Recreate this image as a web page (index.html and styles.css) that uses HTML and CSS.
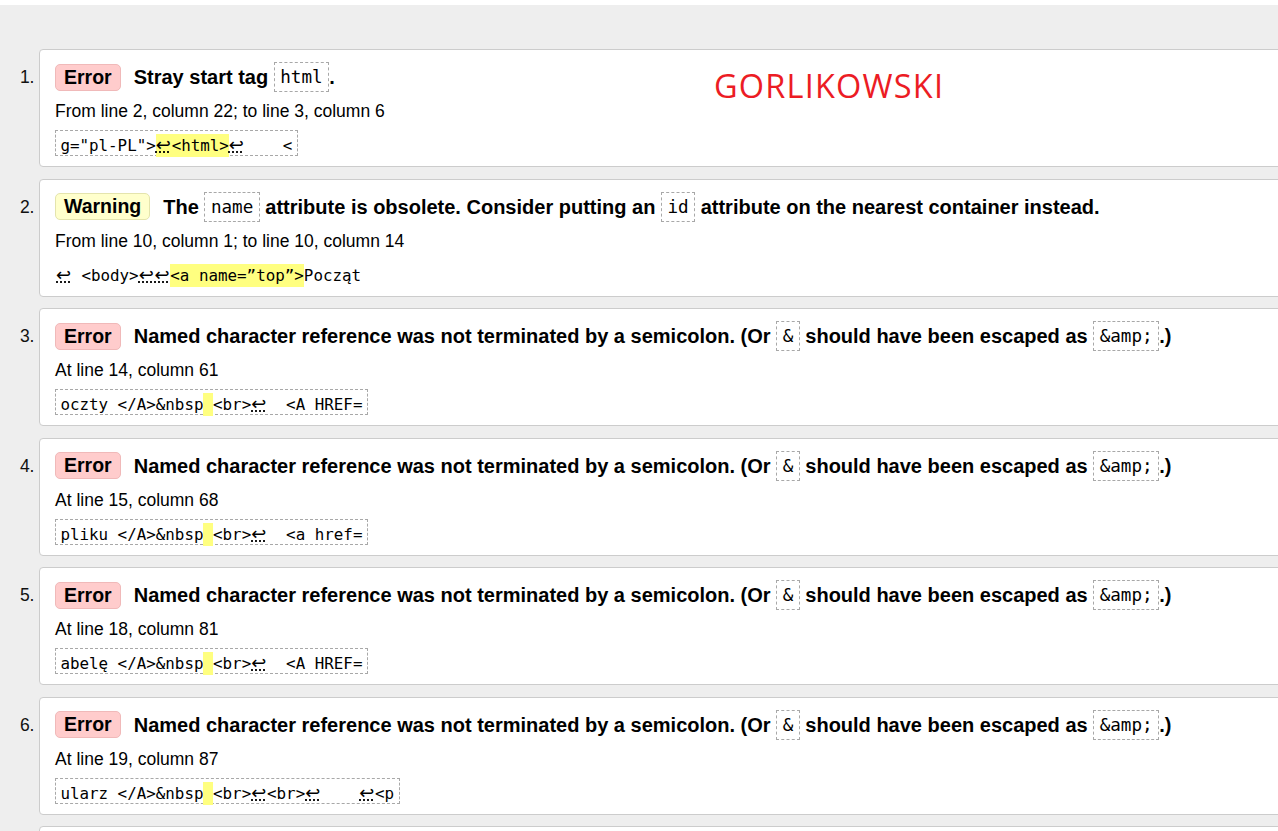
FILE: index.html
```html
<!DOCTYPE html>
<html lang="en">
<head>
<meta charset="utf-8">
<title>Validation results</title>
<link rel="stylesheet" href="styles.css">
</head>
<body>
<div class="brand">GORLIKOWSKI</div>
<ol class="results">
  <li class="item">
    <span class="num">1.</span>
    <div class="card">
      <p class="msg"><span class="badge error">Error</span><span class="text">Stray start tag <code>html</code>.</span></p>
      <p class="loc">From line 2, column 22; to line 3, column 6</p>
      <p class="extract">g="pl-PL"&gt;<mark><abbr class="lf" title="U+000A LINE FEED">↩</abbr>&lt;html&gt;</mark><abbr class="lf" title="U+000A LINE FEED">↩</abbr>    &lt;</p>
    </div>
  </li>
  <li class="item">
    <span class="num">2.</span>
    <div class="card">
      <p class="msg"><span class="badge warning">Warning</span><span class="text">The <code>name</code> attribute is obsolete. Consider putting an <code>id</code> attribute on the nearest container instead.</span></p>
      <p class="loc">From line 10, column 1; to line 10, column 14</p>
      <p class="extract plain"><abbr class="lf" title="U+000A LINE FEED">↩</abbr> &lt;body&gt;<abbr class="lf" title="U+000A LINE FEED">↩</abbr><abbr class="lf" title="U+000A LINE FEED">↩</abbr><mark>&lt;a name=”top”&gt;</mark>Począt</p>
    </div>
  </li>
  <li class="item">
    <span class="num">3.</span>
    <div class="card">
      <p class="msg"><span class="badge error">Error</span><span class="text">Named character reference was not terminated by a semicolon. (Or <code>&amp;</code> should have been escaped as <code>&amp;amp;</code>.)</span></p>
      <p class="loc">At line 14, column 61</p>
      <p class="extract">oczty &lt;/A&gt;&amp;nbsp<mark> </mark>&lt;br&gt;<abbr class="lf" title="U+000A LINE FEED">↩</abbr>  &lt;A HREF=</p>
    </div>
  </li>
  <li class="item">
    <span class="num">4.</span>
    <div class="card">
      <p class="msg"><span class="badge error">Error</span><span class="text">Named character reference was not terminated by a semicolon. (Or <code>&amp;</code> should have been escaped as <code>&amp;amp;</code>.)</span></p>
      <p class="loc">At line 15, column 68</p>
      <p class="extract">pliku &lt;/A&gt;&amp;nbsp<mark> </mark>&lt;br&gt;<abbr class="lf" title="U+000A LINE FEED">↩</abbr>  &lt;a href=</p>
    </div>
  </li>
  <li class="item">
    <span class="num">5.</span>
    <div class="card">
      <p class="msg"><span class="badge error">Error</span><span class="text">Named character reference was not terminated by a semicolon. (Or <code>&amp;</code> should have been escaped as <code>&amp;amp;</code>.)</span></p>
      <p class="loc">At line 18, column 81</p>
      <p class="extract">abelę &lt;/A&gt;&amp;nbsp<mark> </mark>&lt;br&gt;<abbr class="lf" title="U+000A LINE FEED">↩</abbr>  &lt;A HREF=</p>
    </div>
  </li>
  <li class="item">
    <span class="num">6.</span>
    <div class="card">
      <p class="msg"><span class="badge error">Error</span><span class="text">Named character reference was not terminated by a semicolon. (Or <code>&amp;</code> should have been escaped as <code>&amp;amp;</code>.)</span></p>
      <p class="loc">At line 19, column 87</p>
      <p class="extract">ularz &lt;/A&gt;&amp;nbsp<mark> </mark>&lt;br&gt;<abbr class="lf" title="U+000A LINE FEED">↩</abbr>&lt;br&gt;<abbr class="lf" title="U+000A LINE FEED">↩</abbr>    <abbr class="lf" title="U+000A LINE FEED">↩</abbr>&lt;p</p>
    </div>
  </li>
  <li class="item">
    <span class="num"></span>
    <div class="card card-empty"></div>
  </li>
</ol>
</body>
</html>
```

FILE: styles.css
```css
html, body {
  margin: 0;
  padding: 0;
}

body {
  position: relative;
  background: #eeeeee;
  border-top: 5px solid #ffffff;
  font-family: "Liberation Sans", Arial, sans-serif;
  color: #000;
  overflow: hidden;
}

.brand {
  position: absolute;
  left: 714px;
  top: 64.5px;
  font-family: "Open Sans", sans-serif;
  font-size: 32.5px;
  line-height: 32px;
  letter-spacing: 1.2px;
  color: #ec1c24;
  z-index: 2;
}

.results {
  list-style: none;
  margin: 0;
  padding: 44px 0 0 0;
}

.item {
  display: flex;
  align-items: flex-start;
  margin-bottom: 11.5px;
}

.num {
  flex: none;
  width: 34.5px;
  margin-right: 4.5px;
  padding-top: 13px;
  text-align: right;
  font-size: 17.5px;
  line-height: 30px;
  color: #111;
}

.card {
  flex: 1;
  min-width: 0;
  margin-right: -20px;
  background: #fff;
  border: 1px solid #cccccc;
  border-radius: 4px;
  padding: 12px 0 10px 15px;
}

.card-empty {
  height: 96px;
}

.msg {
  margin: 0;
  height: 30px;
  display: flex;
  align-items: center;
  font-weight: bold;
  font-size: 20px;
  line-height: 30px;
  white-space: nowrap;
}

.badge {
  flex: none;
  border: 1px solid;
  border-radius: 5px;
  padding: 0 8px;
  font-size: 19.5px;
  line-height: 25px;
  margin-right: 13px;
}

.badge.error {
  background: #ffcccc;
  border-color: #f0b9b9;
}

.badge.warning {
  background: #ffffcc;
  border-color: #e4e4ad;
}

.msg code {
  display: inline-block;
  vertical-align: top;
  font-family: "DejaVu Sans Mono", monospace;
  font-weight: normal;
  font-size: 17.6px;
  line-height: 28px;
  padding: 0 5.5px;
  border: 1px dashed #a8a8a8;
}

.loc {
  margin: 8px 0 0;
  font-size: 17.5px;
  line-height: 22px;
}

.extract {
  margin: 8px 0 0;
  width: fit-content;
  height: 20px;
  padding: 4px 4.4px 0;
  border: 1px dashed #a8a8a8;
  font-family: "DejaVu Sans Mono", monospace;
  font-size: 15.85px;
  line-height: 20px;
  white-space: pre;
}

.extract.plain {
  border-color: transparent;
  padding-left: 0;
}

.extract mark {
  background: #ffff80;
  color: inherit;
  padding: 2px 0;
}

.lf {
  display: inline-block;
  width: 15.85px;
  font-family: "DejaVu Sans", sans-serif;
  font-size: 18px;
  text-decoration: underline dotted;
}
```
